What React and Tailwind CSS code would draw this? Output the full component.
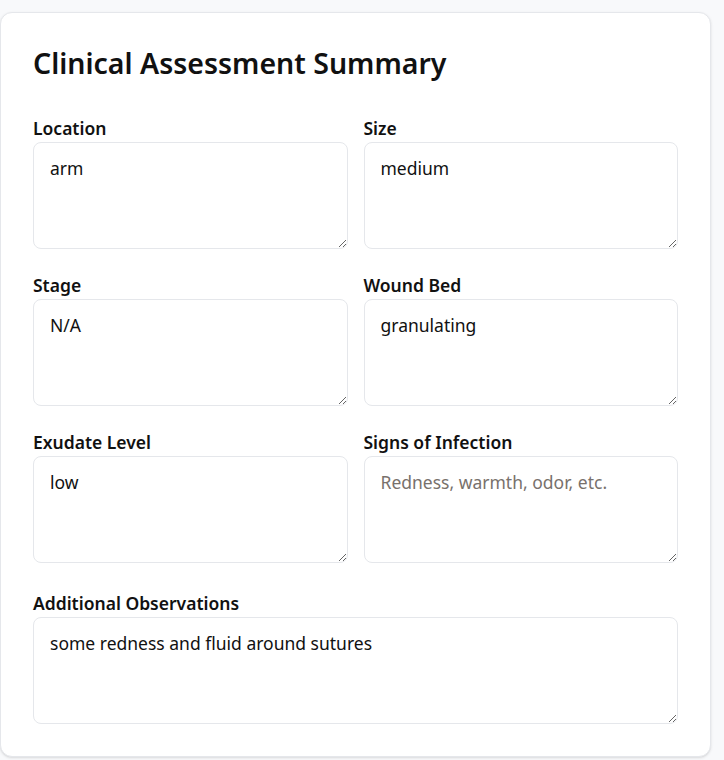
import React, { useState } from 'react';

const fields = [
  { key: 'location', label: 'Location', value: 'arm' },
  { key: 'size', label: 'Size', value: 'medium' },
  { key: 'stage', label: 'Stage', value: 'N/A' },
  { key: 'bed', label: 'Wound Bed', value: 'granulating' },
  { key: 'exudate', label: 'Exudate Level', value: 'low' },
  { key: 'infection', label: 'Signs of Infection', value: '', placeholder: 'Redness, warmth, odor, etc.' },
];

const Field = ({ label, value, placeholder, onChange }) => (
  <div className="flex flex-col">
    <label className="text-[17.5px] leading-7 font-semibold text-[#111111]">{label}</label>
    <textarea
      value={value}
      placeholder={placeholder}
      onChange={(e) => onChange(e.target.value)}
      className="h-[107px] w-full rounded-lg border border-[#e5e7eb] bg-white px-4 pt-[13px] pb-[11px] text-[17.5px] leading-6 text-[#111111] placeholder:text-[#78716c] focus:outline-none"
    />
  </div>
);

const App = () => {
  const [values, setValues] = useState(
    Object.fromEntries(fields.map((f) => [f.key, f.value]))
  );
  const [notes, setNotes] = useState('some redness and fluid around sutures');

  const update = (key) => (v) => setValues((prev) => ({ ...prev, [key]: v }));

  return (
    <div className="min-h-screen bg-[#f8f9fb] pt-3 pr-[13px]" style={{ fontFamily: '"Noto Sans", sans-serif' }}>
      <div className="w-[711px] rounded-xl border border-[#e5e7eb] bg-white px-8 pt-8 pb-8 shadow-sm">
        <h1 className="mb-[33px] text-[28.5px] leading-9 font-semibold text-[#111111]">Clinical Assessment Summary</h1>

        <div className="grid grid-cols-2 gap-x-4 gap-y-[22px]">
          {fields.map((f) => (
            <Field
              key={f.key}
              label={f.label}
              value={values[f.key]}
              placeholder={f.placeholder}
              onChange={update(f.key)}
            />
          ))}
        </div>

        <div className="mt-[26px]">
          <Field label="Additional Observations" value={notes} onChange={setNotes} />
        </div>
      </div>
    </div>
  );
};

export default App;
